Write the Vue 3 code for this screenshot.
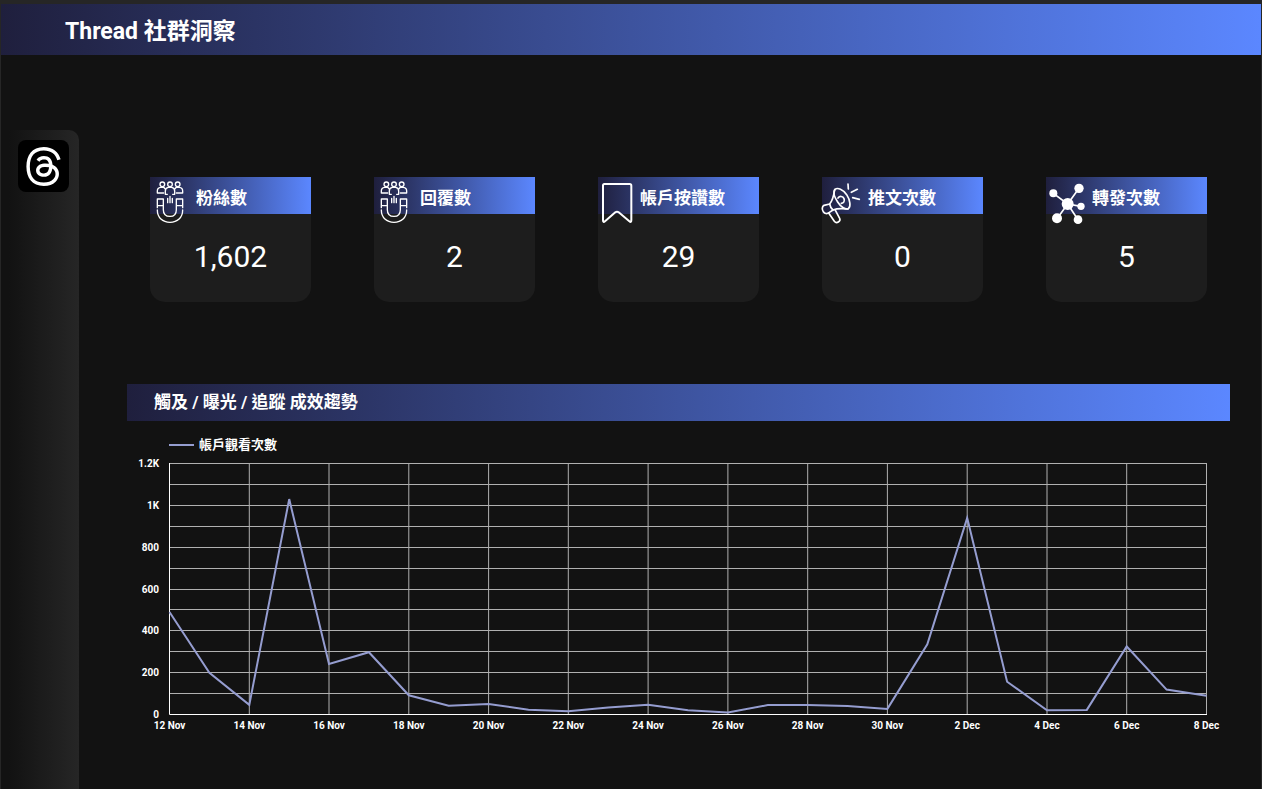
<script setup>
const metrics = [
  { label: '粉絲數', value: '1,602', icon: 'magnet' },
  { label: '回覆數', value: '2', icon: 'magnet' },
  { label: '帳戶按讚數', value: '29', icon: 'bookmark' },
  { label: '推文次數', value: '0', icon: 'megaphone' },
  { label: '轉發次數', value: '5', icon: 'network' },
]

const views = [
  490, 200, 46, 1030, 242, 298, 92, 42, 50, 23, 16, 34, 47, 20, 9, 45, 46, 40,
  27, 335, 940, 157, 20, 22, 325, 119, 90,
]

const plot = { left: 42, right: 1079, top: 42, bottom: 293, max: 1200 }
const stepX = (plot.right - plot.left) / (views.length - 1)
const toX = (i) => Math.round((plot.left + i * stepX) * 10) / 10
const toY = (v) =>
  Math.round((plot.bottom - (v / plot.max) * (plot.bottom - plot.top)) * 10) / 10

const points = views.map((v, i) => `${toX(i)},${toY(v)}`).join(' ')
const rows = Array.from({ length: 12 }, (_, i) => Math.round(toY((i + 1) * 100)))
const yTicks = [0, 200, 400, 600, 800, 1000, 1200].map((v) => ({
  y: Math.round(toY(v)),
  text: v >= 1000 ? `${v / 1000}K` : String(v),
}))
const xTicks = Array.from({ length: 14 }, (_, i) => {
  const day = 12 + i * 2
  return { x: toX(i * 2), text: day <= 30 ? `${day} Nov` : `${day - 30} Dec` }
})
</script>

<template>
  <div class="page">
    <header class="topbar">
      <h1>Thread 社群洞察</h1>
    </header>

    <div class="body">
      <nav class="sidebar" aria-label="Threads">
        <div class="tile">
          <svg class="logo" viewBox="0 0 24 24" aria-hidden="true">
            <path d="M12.186 24h-.007c-3.581-.024-6.334-1.205-8.184-3.509C2.35 18.44 1.5 15.586 1.472 12.01v-.017c.03-3.579.879-6.43 2.525-8.482C5.845 1.205 8.6.024 12.18 0h.014c2.746.02 5.043.725 6.826 2.098 1.677 1.29 2.858 3.13 3.509 5.467l-2.04.569c-1.104-3.96-3.898-5.984-8.304-6.015-2.91.022-5.11.936-6.54 2.717C4.307 6.504 3.616 8.914 3.589 12c.027 3.086.718 5.496 2.057 7.164 1.43 1.783 3.631 2.698 6.54 2.717 2.623-.02 4.358-.631 5.8-2.045 1.647-1.613 1.618-3.593 1.09-4.798-.31-.71-.873-1.3-1.634-1.75-.192 1.352-.622 2.446-1.284 3.272-.886 1.102-2.14 1.704-3.73 1.79-1.202.065-2.361-.218-3.259-.801-1.063-.689-1.685-1.74-1.752-2.964-.065-1.19.408-2.285 1.33-3.082.88-.76 2.119-1.207 3.583-1.291a13.853 13.853 0 0 1 3.02.142c-.126-.742-.375-1.332-.75-1.757-.513-.586-1.308-.883-2.359-.89h-.029c-.844 0-1.992.232-2.721 1.32L7.734 7.847c.98-1.454 2.568-2.256 4.478-2.256h.044c3.194.02 5.097 1.975 5.287 5.388.108.046.216.094.321.142 1.49.7 2.58 1.761 3.154 3.07.797 1.82.871 4.79-1.548 7.158-1.85 1.81-4.094 2.628-7.277 2.65Zm1.003-11.69c-.242 0-.487.007-.739.021-1.836.103-2.98.946-2.916 2.143.067 1.256 1.452 1.839 2.784 1.767 1.224-.065 2.818-.543 3.086-3.71a10.5 10.5 0 0 0-2.215-.221z" />
          </svg>
        </div>
      </nav>

      <main class="content">
        <section class="cards">
          <article v-for="m in metrics" :key="m.label" class="card">
            <h2 class="card-title" :class="m.icon">{{ m.label }}</h2>
            <p class="card-value">{{ m.value }}</p>

            <svg v-if="m.icon === 'magnet'" class="icon" viewBox="0 0 132 144" stroke-width="4" aria-hidden="true">
              <circle cx="49" cy="22" r="7" />
              <circle cx="72" cy="22" r="7" />
              <circle cx="95" cy="22" r="7" />
              <path d="M53 48H34V42Q34 32 44 31H53L58 36" />
              <path d="M91 48H110V42Q110 32 100 31H91L86 36" />
              <path d="M64 52H58V42Q58 32 67 31H77Q86 32 86 42V52H80" />
              <path d="M65 64V77M72 58V77M79 64V77" />
              <path d="M34 92V66H52V98Q52 118 72 118Q91 118 91 98V66H110V92M34 86H52M91 86H110" />
              <path d="M34 99C34 122 50 136 72 136S110 122 110 99" />
            </svg>

            <svg v-else-if="m.icon === 'bookmark'" class="icon" viewBox="0 0 132 144" stroke-width="6" aria-hidden="true">
              <path d="M31 21H107Q112 21 112 26V130Q112 138 106 133L74 106Q69 102 64 106L33 133Q27 138 27 130V26Q27 21 31 21Z" />
            </svg>

            <svg v-else-if="m.icon === 'megaphone'" class="icon" viewBox="0 0 132 144" stroke-width="5" aria-hidden="true">
              <g transform="translate(3 0)">
                <path d="M48 37C56 31 72 37 83 53C94 70 96 89 88 95C80 99 66 91 56 75C45 58 42 44 48 37Z" />
                <path d="M47 38C44 58 42 70 32 81L15 85C8 89 9 99 13 104C17 110 24 112 30 107L42 99C56 93 70 94 87 96" />
                <path d="M32 81Q34 92 42 99" />
                <path d="M57 63C62 56 72 57 75 65C78 73 74 78 67 79" />
                <path d="M29 108L46 133Q51 139 58 135Q65 131 62 124L48 98" />
                <path d="M88 36L87 21M97 46L115 37M101 62L121 67" />
              </g>
            </svg>

            <svg v-else class="icon" viewBox="0 0 132 144" stroke-width="5" aria-hidden="true">
              <path d="M77 81L34 49M77 81L111 34M77 81L117 88M77 81L46 124M77 81L108 128" />
              <g class="nodes">
                <circle cx="77" cy="81" r="18" />
                <circle cx="34" cy="49" r="12" />
                <circle cx="111" cy="34" r="14" />
                <circle cx="117" cy="88" r="11" />
                <circle cx="45" cy="124" r="15" />
                <circle cx="108" cy="128" r="13" />
              </g>
            </svg>
          </article>
        </section>

        <section class="trend">
          <h2 class="trend-title">觸及 / 曝光 / 追蹤 成效趨勢</h2>
          <svg class="chart" viewBox="0 0 1103 320" role="img" aria-label="帳戶觀看次數">
            <path class="series" d="M42 24H67" />
            <text class="legend" x="72" y="28">帳戶觀看次數</text>
            <line v-for="y in rows" :key="'r' + y" class="grid" :x1="plot.left" :x2="plot.right + 1" :y1="y + 0.5" :y2="y + 0.5" />
            <line v-for="t in xTicks" :key="'c' + t.text" class="grid" :x1="t.x + 0.5" :x2="t.x + 0.5" :y1="plot.top" :y2="plot.bottom" />
            <path class="axis" d="M42.5 42V293.5H1080" />
            <polyline class="series" :points="points" transform="translate(0.5 0.5)" />
            <text v-for="t in yTicks" :key="'y' + t.text" class="tick y-tick" x="32" :y="t.y + 4">{{ t.text }}</text>
            <text v-for="t in xTicks" :key="'x' + t.text" class="tick x-tick" :x="t.x + 0.5" y="308">{{ t.text }}</text>
          </svg>
        </section>
      </main>
    </div>
  </div>
</template>

<style>
body {
  margin: 0;
  background: #121212;
}
</style>

<style scoped>
.page {
  box-sizing: border-box;
  display: flex;
  flex-direction: column;
  min-height: 100vh;
  border-top: 4px solid #262626;
  border-left: 1px solid #262626;
  border-right: 1px solid #262626;
  background: #121212;
  color: #fff;
  font-family: Roboto, "Noto Sans CJK TC", sans-serif;
}
h1,
h2,
p {
  margin: 0;
}
.topbar {
  box-sizing: border-box;
  display: flex;
  align-items: center;
  height: 51px;
  padding: 5px 64px 0;
  background: linear-gradient(90deg, #1f1f3d, #5b87ff);
}
h1 {
  font-size: 23px;
  line-height: 30px;
  font-weight: 700;
}
.body {
  flex: 1;
  display: flex;
}
.sidebar {
  box-sizing: border-box;
  flex: none;
  width: 78px;
  margin-top: 75px;
  padding: 10px 10px 0 17px;
  border-top-right-radius: 10px;
  background: linear-gradient(90deg, #121212 10%, #262626);
}
.tile {
  display: grid;
  place-items: center;
  height: 52px;
  border-radius: 8px;
  background: #000;
}
.logo {
  width: 39px;
  height: 39px;
  fill: #fff;
}
.content {
  flex: 1;
  min-width: 0;
  padding: 122px 31px 0 48px;
}
.cards {
  display: grid;
  grid-template-columns: repeat(5, 1fr);
  gap: 63px;
  margin: 0 23px;
}
.card {
  position: relative;
  height: 125px;
  border-radius: 0 0 15px 15px;
  background: #1d1d1d;
}
.card-title {
  height: 37px;
  padding-left: 46px;
  background: linear-gradient(90deg, #1f1f3d, #5b87ff);
  font-size: 17px;
  line-height: 42px;
  font-weight: 700;
  white-space: nowrap;
}
.card-title.bookmark {
  padding-left: 42px;
}
.card-value {
  padding-top: 24px;
  font-size: 30px;
  line-height: 38px;
  text-align: center;
}
.icon {
  position: absolute;
  top: 0;
  left: -4px;
  width: 44px;
  height: 48px;
  fill: none;
  stroke: #fff;
  stroke-linecap: round;
  stroke-linejoin: round;
}
.nodes {
  fill: #fff;
  stroke: none;
}
.trend {
  margin-top: 82px;
}
.trend-title {
  height: 37px;
  padding-left: 27px;
  background: linear-gradient(90deg, #1f1f3d, #5b87ff);
  font-size: 17px;
  line-height: 37px;
  font-weight: 700;
}
.chart {
  display: block;
  width: 100%;
}
.grid {
  stroke: #b0b0b0;
  stroke-width: 1px;
}
.axis {
  fill: none;
  stroke: #fff;
}
.series {
  fill: none;
  stroke: #959dd0;
  stroke-width: 2px;
}
.legend {
  fill: #fff;
  font-size: 13px;
  font-weight: 700;
}
.tick {
  fill: #fff;
  font-size: 10px;
  font-weight: 700;
}
.y-tick {
  text-anchor: end;
}
.x-tick {
  text-anchor: middle;
}
</style>
